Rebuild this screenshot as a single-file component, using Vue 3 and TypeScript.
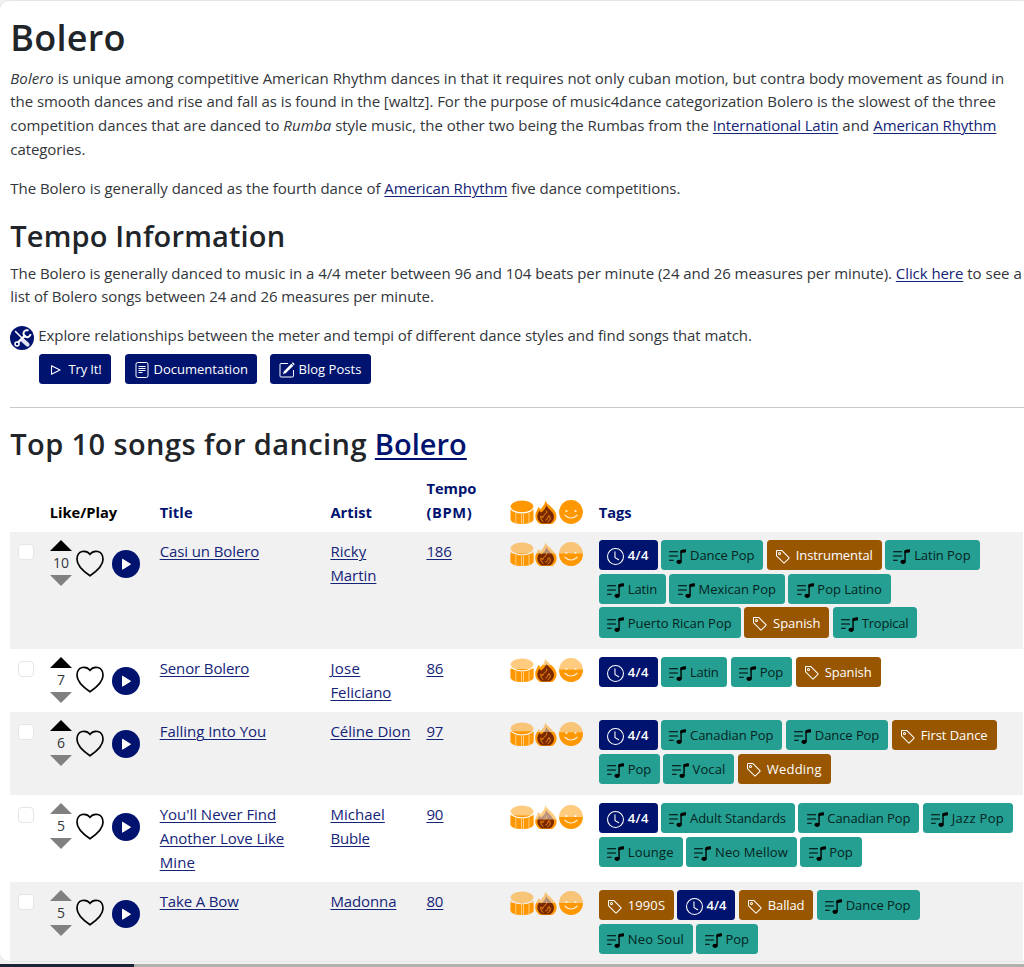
<script setup lang="ts">
import type { Directive } from 'vue'

type Seg = { t: string; w: number; k?: 'em' | 'link' }
type Tag = { t: string; w: number; k: 'meter' | 'style' | 'other' }
type Line = [string, number]
interface Song {
  votes: number
  liked: boolean
  title: Line[]
  artist: Line[]
  bpm: Line
  levels: [number, number, number]
  tags: Tag[]
}

// Tracks text so that it spans the given width.
const fit = (el: HTMLElement, width: number) => {
  el.style.letterSpacing = '0px'
  const natural = el.getBoundingClientRect().width
  const count = (el.textContent ?? '').length
  if (count > 0) el.style.letterSpacing = `${(width - natural) / count}px`
}
const vFit: Directive<HTMLElement, number> = {
  mounted: (el, b) => fit(el, b.value),
}

const intro: Seg[][] = [
  [
    { t: 'Bolero', w: 43.5, k: 'em' },
    { t: ' is unique among competitive American Rhythm dances in that it requires not only cuban motion, but contra body movement as found in', w: 950.5 },
  ],
  [{ t: 'the smooth dances and rise and fall as is found in the [waltz]. For the purpose of music4dance categorization Bolero is the slowest of the three', w: 985.5 }],
  [
    { t: 'competition dances that are danced to ', w: 273 },
    { t: 'Rumba', w: 48, k: 'em' },
    { t: ' style music, the other two being the Rumbas from the ', w: 381.5 },
    { t: 'International Latin', w: 125.5, k: 'link' },
    { t: ' and ', w: 35 },
    { t: 'American Rhythm', w: 123, k: 'link' },
  ],
  [{ t: 'categories.', w: 75 }],
]

const fourth: Seg[][] = [
  [
    { t: 'The Bolero is generally danced as the fourth dance of ', w: 374 },
    { t: 'American Rhythm', w: 123, k: 'link' },
    { t: ' five dance competitions.', w: 173 },
  ],
]
const tempo: Seg[][] = [
  [
    { t: 'The Bolero is generally danced to music in a 4/4 meter between 96 and 104 beats per minute (24 and 26 measures per minute). ', w: 885.5 },
    { t: 'Click here', w: 67.5, k: 'link' },
    { t: ' to see a', w: 58.5 },
  ],
  [{ t: 'list of Bolero songs between 24 and 26 measures per minute.', w: 423.5 }],
]
const paragraphs = { intro, fourth }

const meter = (w = 59): Tag => ({ t: '4/4', w, k: 'meter' })
const style = (t: string, w: number): Tag => ({ t, w, k: 'style' })
const other = (t: string, w: number): Tag => ({ t, w, k: 'other' })

const songs: Song[] = [
  {
    votes: 10, liked: true, title: [['Casi un Bolero', 99.5]], artist: [['Ricky', 36], ['Martin', 46]], bpm: ['186', 25.5],
    levels: [0.48, 0.48, 0.48],
    tags: [meter(), style('Dance Pop', 102.5), other('Instrumental', 115), style('Latin Pop', 94.5), style('Latin', 67.5), style('Mexican Pop', 115.5), style('Pop Latino', 102.5), style('Puerto Rican Pop', 142), other('Spanish', 85.5), style('Tropical', 84.5)],
  },
  {
    votes: 7, liked: true, title: [['Senor Bolero', 89.5]], artist: [['Jose', 30], ['Feliciano', 61]], bpm: ['86', 17],
    levels: [0.46, 0.3, 0.48],
    tags: [meter(), style('Latin', 66.5), style('Pop', 61.5), other('Spanish', 85)],
  },
  {
    votes: 6, liked: true, title: [['Falling Into You', 106.5]], artist: [['Céline Dion', 80]], bpm: ['97', 17],
    levels: [0.39, 0.42, 0.43],
    tags: [meter(), style('Canadian Pop', 121.5), style('Dance Pop', 102.5), other('First Dance', 105), style('Pop', 61.5), style('Vocal', 71), other('Wedding', 93)],
  },
  {
    votes: 5, liked: false, title: [["You'll Never Find", 116.5], ['Another Love Like', 124.5], ['Mine', 35.5]], artist: [['Michael', 54.5], ['Buble', 39.5]], bpm: ['90', 17],
    levels: [0.44, 0.6, 0.5],
    tags: [meter(), style('Adult Standards', 134), style('Canadian Pop', 121), style('Jazz Pop', 90.5), style('Lounge', 84), style('Neo Mellow', 111), style('Pop', 61.5)],
  },
  {
    votes: 5, liked: false, title: [['Take A Bow', 79]], artist: [['Madonna', 66]], bpm: ['80', 17],
    levels: [0.5, 0.5, 0.5],
    tags: [other('1990S', 75.5), meter(58), other('Ballad', 74.5), style('Dance Pop', 103), style('Neo Soul', 94.5), style('Pop', 61.5)],
  },
]

const rates = ['drum', 'fire', 'face'] as const
const labelWidth = (tag: Tag) => tag.w - 29.5 - 8.6
</script>

<template>
  <div class="page">
    <svg class="defs" aria-hidden="true">
      <symbol id="clock" viewBox="0 0 16 16">
        <path d="M8 3.5a.5.5 0 0 0-1 0V9a.5.5 0 0 0 .252.434l3.5 2a.5.5 0 0 0 .496-.868L8 8.71V3.5z" />
        <path d="M8 16A8 8 0 1 0 8 0a8 8 0 0 0 0 16zm7-8A7 7 0 1 1 1 8a7 7 0 0 1 14 0z" />
      </symbol>
      <symbol id="tag" viewBox="0 0 16 16">
        <path d="M6 4.5a1.5 1.5 0 1 1-3 0 1.5 1.5 0 0 1 3 0zm-1 0a.5.5 0 1 0-1 0 .5.5 0 0 0 1 0z" />
        <path d="M2 1h4.586a1 1 0 0 1 .707.293l7 7a1 1 0 0 1 0 1.414l-4.586 4.586a1 1 0 0 1-1.414 0l-7-7A1 1 0 0 1 1 6.586V2a1 1 0 0 1 1-1zm0 5.586 7 7L13.586 9l-7-7H2v4.586z" />
      </symbol>
      <symbol id="music" viewBox="0 0 16 16">
        <path d="M12 13c0 1.105-1.12 2-2.5 2S7 14.105 7 13s1.12-2 2.5-2 2.5.895 2.5 2z" />
        <path d="M12 3v10h-1.3V3H12z" />
        <path d="M10.7 2.82a1 1 0 0 1 .804-.98l3-.6A1 1 0 0 1 16 2.22V4l-5.3 1V2.82z" />
        <path d="M0 11.5a.5.5 0 0 1 .5-.5H4a.5.5 0 0 1 0 1H.5a.5.5 0 0 1-.5-.5zm0-4A.5.5 0 0 1 .5 7H8a.5.5 0 0 1 0 1H.5a.5.5 0 0 1-.5-.5zm0-4A.5.5 0 0 1 .5 3H8a.5.5 0 0 1 0 1H.5a.5.5 0 0 1-.5-.5z" />
      </symbol>
      <symbol id="drum" viewBox="0 0 24 24">
        <ellipse cx="12" cy="6.3" rx="11.4" ry="5.9" fill="#ff9800" />
        <path d="M.5 9.2C3 12.200 7 13.400 12 13.400S21 12.200 23.5 9.2V20C22 23 17 24 12 24S2 23 .5 20Z" fill="#ff9800" />
        <path d="M5.800 12.800V23.300M11.500 13.400V24M13.500 13.400V24M19 12.500V23" stroke="#ffe2b5" stroke-width=".7" fill="none" />
      </symbol>
      <symbol id="fire" viewBox="0 0 24 24">
        <path d="M11 0C12 4.500 22.500 8.500 22.500 16.500C22.500 20 20.500 22.500 18 24H6C3 22 1.300 19.500 1.300 16C1.300 12.500 3 10.500 4.500 7C5.500 8 6 8.500 6.500 9.500C8.500 6.500 11.500 4 11 0Z" fill="#ff9800" />
        <path d="M12 4.500C13 8.500 20 11.500 20 16.800C20 20 18 22.800 15.500 23.500H8C5 22 3.300 19.500 3.300 16.500C3.300 14 4.500 12.500 5.200 10.800L7 12.500C9.500 11 12.300 8 12 4.500Z" fill="#7a2800" />
        <path d="M12.500 10.500C13.800 14.500 9 14 9 17.500L6.800 16.200C6.500 18.500 7.500 20.500 9.300 21.500M11.500 20C14 20 13 17.500 15 15.500C17 17.500 16.500 20.500 13.500 22" stroke="#f08c10" stroke-width="1" fill="none" />
      </symbol>
      <symbol id="face" viewBox="0 0 24 24">
        <circle cx="12" cy="12" r="11.900" fill="#ff9800" />
        <path d="M5.500 15Q12 21 18.500 15" stroke="#ffecd0" stroke-width="1.100" fill="none" />
        <circle cx="7.500" cy="11" r="1.100" fill="#fff4e4" />
        <circle cx="16.500" cy="11" r="1.100" fill="#fff4e4" />
      </symbol>
    </svg>

    <main class="panel">
      <h1><span v-fit="115.5">Bolero</span></h1>
      <p v-for="(lines, name) in paragraphs" :key="name">
        <span v-for="(line, i) in lines" :key="i" class="line">
          <span v-for="(s, j) in line" :key="j" v-fit="s.w" class="seg" :class="s.k">{{ s.t }}</span>
        </span>
      </p>
      <h2><span v-fit="275">Tempo Information</span></h2>
      <p>
        <span v-for="(line, i) in tempo" :key="i" class="line">
          <span v-for="(s, j) in line" :key="j" v-fit="s.w" class="seg" :class="s.k">{{ s.t }}</span>
        </span>
      </p>

      <div class="explore">
        <svg class="tools" viewBox="0 0 24 24">
          <circle cx="12" cy="12" r="12" fill="#00136f" />
          <path d="M5.500 5.500L15 15" stroke="#fff" stroke-width="1.500" stroke-linecap="round" />
          <path d="M13 14.500L17.500 18.500" stroke="#dfe3f4" stroke-width="4.200" stroke-linecap="round" />
          <path d="M8 16.500L15.500 9" stroke="#fff" stroke-width="2.300" />
          <circle cx="7" cy="18" r="2" fill="none" stroke="#fff" stroke-width="1.500" />
          <path d="M18.500 4.500A3.500 3.500 0 1 0 20.500 8" fill="none" stroke="#fff" stroke-width="2" />
        </svg>
        <span v-fit="713.5" class="seg">Explore relationships between the meter and tempi of different dance styles and find songs that match.</span>
      </div>
      <div class="actions">
        <button class="btn try">
          <svg viewBox="0 0 16 16"><path d="M3.500 3.700v8.600L12 8z" fill="none" stroke="currentColor" stroke-width="1.100" stroke-linejoin="round" /></svg>
          <span v-fit="33">Try It!</span>
        </button>
        <button class="btn docs">
          <svg viewBox="0 0 16 16" fill="none" stroke="currentColor"><rect x="2" y=".5" width="12" height="15" rx="1.700" /><path d="M4.500 4.500h7M4.500 6.500h7M4.500 8.500h7M4.500 10.500h4" /></svg>
          <span v-fit="94.5">Documentation</span>
        </button>
        <button class="btn blog">
          <svg viewBox="0 0 16 16"><path d="M9 1.500H2a1 1 0 0 0-1 1V14a1 1 0 0 0 1 1h11.500a1 1 0 0 0 1-1V8" fill="none" stroke="currentColor" /><path d="M12.300 1.700l2 2-7.600 7.600-2.700.8.700-2.700zM13.500.6a.5.500 0 0 1 .7 0l1.300 1.300a.5.500 0 0 1 0 .7l-.7.6-2-2z" fill="currentColor" /></svg>
          <span v-fit="63">Blog Posts</span>
        </button>
      </div>
      <hr />

      <h2 class="top"><span v-fit="364.5" class="seg">Top 10 songs for dancing </span><span v-fit="92" class="seg link">Bolero</span></h2>

      <div class="row head">
        <span></span>
        <span class="black"><span v-fit="67.5">Like/Play</span></span>
        <span><span v-fit="33">Title</span></span>
        <span><span v-fit="41.5">Artist</span></span>
        <span><span class="line"><span v-fit="50">Tempo</span></span><span class="line"><span v-fit="46">(BPM)</span></span></span>
        <div class="rates">
          <svg v-for="r in rates" :key="r" viewBox="0 0 24 24"><use :href="'#' + r" /></svg>
        </div>
        <span><span v-fit="33">Tags</span></span>
      </div>

      <div v-for="(song, n) in songs" :key="n" class="row" :class="{ striped: n % 2 === 0 }">
        <div><span class="check"></span></div>
        <div class="like">
          <div class="vote">
            <svg viewBox="0 0 22 11"><path d="M0 11L11 0L22 11z" :fill="song.liked ? '#000' : '#808080'" /></svg>
            <span>{{ song.votes }}</span>
            <svg viewBox="0 0 22 11"><path d="M0 0L11 11L22 0z" fill="#808080" /></svg>
          </div>
          <svg class="heart" viewBox="0 0 28 27"><path d="M14 4.300C10.500-.3 1-.2 1 9.500C1 16 7 21 14 25.800C21 21 27 16 27 9.500C27-.2 17.500-.3 14 4.300Z" fill="none" stroke="#000" stroke-width="1.700" /></svg>
          <svg class="play" viewBox="0 0 28 28"><circle cx="14" cy="14" r="14" fill="#00136f" /><path d="M10.500 9.200v10L18.500 14.200z" fill="#fff" stroke="#fff" stroke-linejoin="round" /></svg>
        </div>
        <div><span v-for="l in song.title" :key="l[0]" class="line"><a v-fit="l[1]" class="link">{{ l[0] }}</a></span></div>
        <div><span v-for="l in song.artist" :key="l[0]" class="line"><a v-fit="l[1]" class="link">{{ l[0] }}</a></span></div>
        <div><span class="line"><a v-fit="song.bpm[1]" class="link">{{ song.bpm[0] }}</a></span></div>
        <div class="rates">
          <svg v-for="(r, i) in rates" :key="r" viewBox="0 0 24 24">
            <use :href="'#' + r" opacity=".5" />
            <svg :y="24 * song.levels[i]" width="24" :height="24 * (1 - song.levels[i])" :viewBox="`0 ${24 * song.levels[i]} 24 ${24 * (1 - song.levels[i])}`"><use :href="'#' + r" width="24" height="24" /></svg>
          </svg>
        </div>
        <div class="tags">
          <span v-for="(tag, i) in song.tags" :key="i" class="tag" :class="tag.k" :style="{ width: tag.w + 'px' }">
            <svg viewBox="0 0 16 16"><use :href="tag.k === 'meter' ? '#clock' : tag.k === 'style' ? '#music' : '#tag'" /></svg>
            <span v-fit="labelWidth(tag)">{{ tag.t }}</span>
          </span>
        </div>
      </div>
    </main>
    <div class="footer"><div class="progress"></div></div>
  </div>
</template>

<style>
body {
  margin: 0;
  background: #f1f1f1;
}
</style>

<style scoped>
.page {
  box-sizing: border-box;
  height: 967px;
  width: 1024px;
  overflow: hidden;
  color: #32363a;
  font: 15px/23.7px "Open Sans", "Noto Sans", sans-serif;
}
.defs {
  display: none;
}
.panel {
  box-sizing: border-box;
  height: 962px;
  width: 1034px;
  margin-left: -1px;
  overflow: hidden;
  padding: 10.200px 0 0 10.300px;
  border: 1px solid #e4e4e4;
  border-radius: 10px;
  background: #fff;
}
h1,
h2 {
  margin: 0;
  color: #212529;
  font-weight: 600;
  white-space: pre;
}
h1 {
  padding-top: 3px;
  margin-bottom: 5px;
  font-size: 36px;
  line-height: 47.400px;
}
h2 {
  margin-bottom: 7px;
  font-size: 29px;
  line-height: 37.900px;
}
h1 span,
h2 span,
.seg,
.line > *,
.head > span > span {
  display: inline-block;
  white-space: pre;
}
.head > span > .line,
.line {
  display: block;
  white-space: nowrap;
  font-size: inherit;
}
p {
  margin: 0 0 15.800px;
}
p .line {
  display: flex;
}
.em {
  font-style: italic;
}
.link {
  color: #142478;
  text-decoration: underline;
  text-decoration-thickness: 1px;
  text-underline-offset: 2px;
}
h2 .link {
  color: #00136f;
  text-decoration-thickness: 2px;
  text-underline-offset: 3px;
}
.explore {
  display: flex;
  gap: 4px;
}
.explore .seg {
  margin-top: -.5px;
}
.tools {
  width: 24px;
  height: 24px;
  margin-top: 1px;
}
.actions {
  display: flex;
  margin: 4px 0 0 28.700px;
}
.btn,
.tag {
  box-sizing: border-box;
  display: flex;
  align-items: center;
  height: 30.300px;
  border: 0;
  border-radius: 3.500px;
  font: 13px/21px "Open Sans", "Noto Sans", sans-serif;
  white-space: nowrap;
}
.btn {
  padding: 1px 0 0 9px;
  background: #00136f;
  color: #fff;
}
.btn svg {
  width: 16px;
  height: 16px;
  margin: 2px 3.500px 0 0;
}
.try {
  width: 72px;
  margin-right: 14px;
}
.btn.try svg {
  margin-right: 4.500px;
}
.docs {
  width: 132px;
  margin-right: 13px;
}
.blog {
  width: 101px;
}
hr {
  margin: 22.500px 1px 17px 0;
  border: 0;
  border-top: 1px solid #c8c9ca;
}
.top {
  margin-bottom: 6.600px;
}
.row {
  display: grid;
  grid-template-columns: 31.500px 110px 170.700px 96px 83.300px 89px 1fr;
  margin-right: 9px;
  padding: 7.900px 0;
}
.row > * {
  padding-left: 7.900px;
}
.striped {
  background: #f1f1f1;
}
.head {
  align-items: end;
  color: #00136f;
  font-size: 14.700px;
  font-weight: 700;
}
.black {
  color: #000;
}
.check {
  box-sizing: border-box;
  display: block;
  width: 16px;
  height: 16px;
  margin-top: 4px;
  border: 1px solid #e3e5ea;
  border-radius: 4px;
  background: #fff;
}
.like {
  display: flex;
  align-items: flex-start;
}
.vote {
  display: flex;
  flex-direction: column;
  align-items: center;
  width: 22px;
  margin-left: .3px;
}
.vote svg {
  display: block;
  width: 22px;
  height: 11px;
}
.vote span {
  height: 24px;
  font-size: 14px;
  line-height: 24px;
}
.heart {
  width: 28px;
  height: 27px;
  margin: 9.500px 0 0 4px;
}
.play {
  width: 28px;
  height: 28px;
  margin: 10px 0 0 8px;
}
.rates {
  display: flex;
  align-self: start;
  gap: .5px;
  padding-top: 1.500px;
}
.rates > svg {
  flex: none;
  width: 24px;
  height: 24px;
}
.head .rates {
  align-self: end;
}
.tags {
  display: flex;
  flex-wrap: wrap;
  align-content: flex-start;
  gap: 3.300px;
  padding-right: 7px;
  padding-bottom: 3.400px;
}
.tag {
  padding-left: 8.400px;
  color: #fff;
}
.tag > span {
  padding-top: 1px;
}
.tag svg {
  flex: none;
  width: 17px;
  height: 17px;
  margin: 3px 3.700px 0 0;
  fill: currentColor;
}
.tag.other svg {
  width: 16px;
  height: 16px;
  margin-right: 4.700px;
}
.meter {
  background: #00136f;
}
.tag.meter > span {
  font-weight: 600;
}
.other {
  background: #985600;
}
.style {
  background: #249f91;
  color: #000;
}
.tag.style > span {
  color: #04231f;
}
.footer {
  height: 4px;
  margin-top: 1.500px;
  background: #b0b0b0;
}
.progress {
  width: 134px;
  height: 100%;
  background: #1b2436;
}
</style>
